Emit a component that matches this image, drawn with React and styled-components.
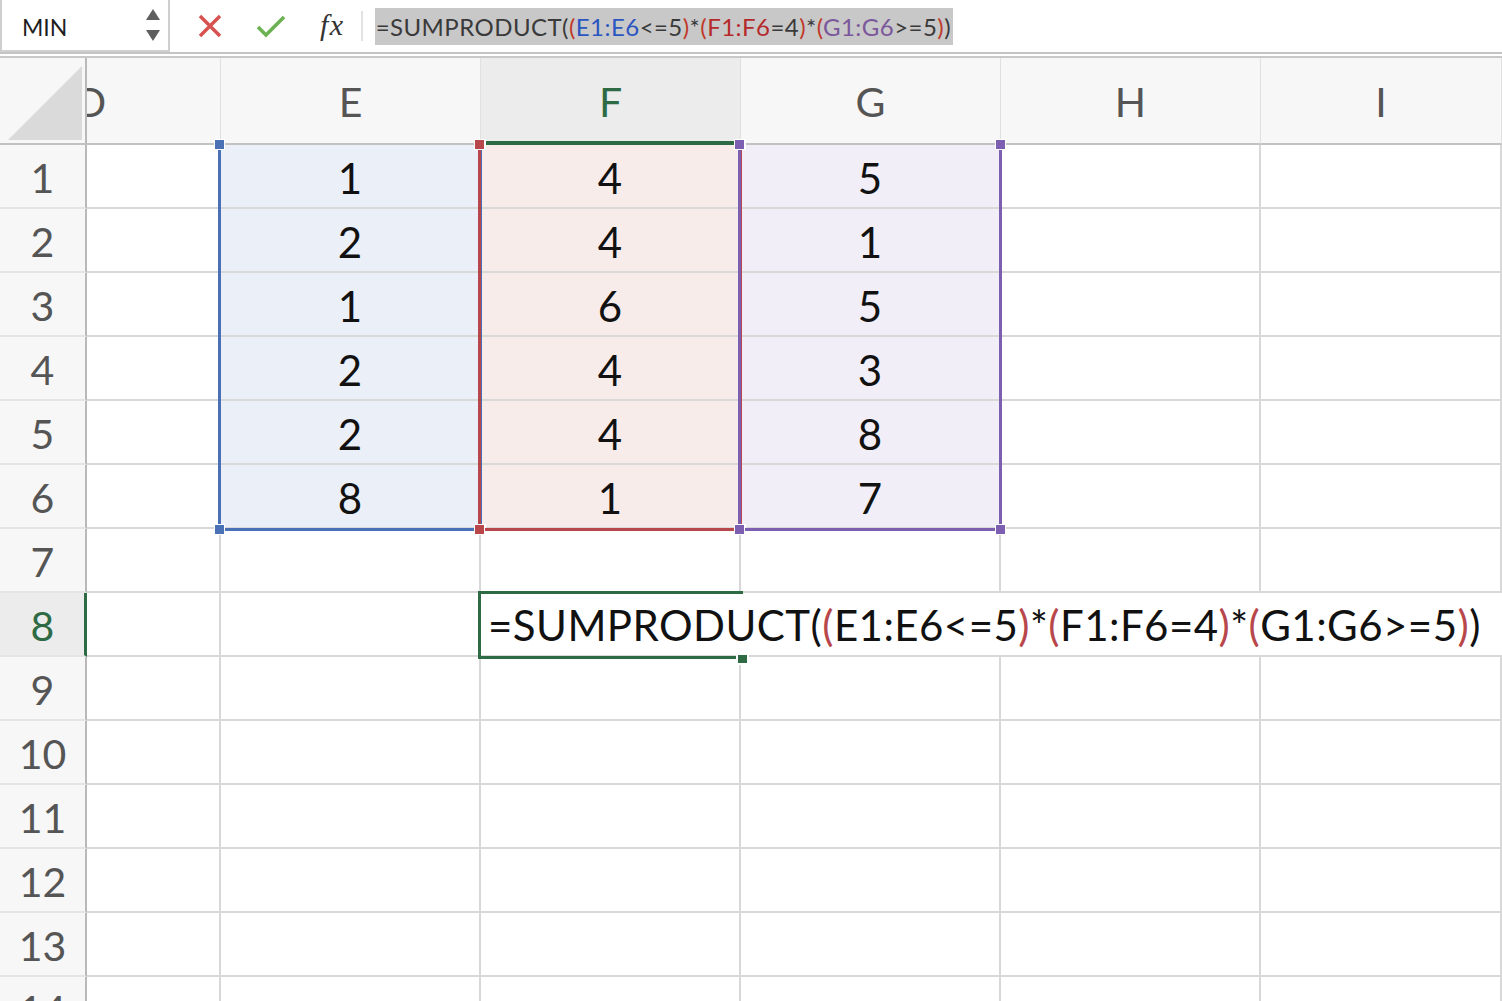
import React from 'react';
import styled, { createGlobalStyle } from 'styled-components';

const GlobalStyle = createGlobalStyle`
  html, body {
    margin: 0;
    padding: 0;
    background: #ffffff;
    overflow: hidden;
  }
  body {
    font-family: Lato, "Open Sans", sans-serif;
  }
  #root {
    width: 1502px;
    height: 1001px;
    overflow: hidden;
  }
`;

const GREEN = '#2e6b45';

const FormulaBar = styled.div`
  display: flex;
  align-items: center;
  height: 52px;
  border-bottom: 2px solid #c4c4c4;
  margin-bottom: 2px;
  background: #ffffff;
`;

const NameBox = styled.div`
  box-sizing: border-box;
  width: 170px;
  height: 52px;
  display: flex;
  align-items: center;
  justify-content: space-between;
  padding: 4px 8px 0 20px;
  border: 2px solid #cfcfcf;
  border-top: none;
  font-size: 23px;
  color: #1e1e1e;
  align-self: flex-start;
`;

const Stepper = styled.div`
  display: flex;
  flex-direction: column;
  gap: 10px;
  margin-top: -4px;
`;

const Tools = styled.div`
  display: flex;
  align-items: center;
  gap: 34px;
  padding: 0 16px 0 28px;
  height: 100%;
`;

const Fx = styled.span`
  font-family: "Liberation Serif", serif;
  font-style: italic;
  font-size: 30px;
  color: #333333;
  letter-spacing: 1.5px;
  margin-top: -2px;
`;

const Divider = styled.div`
  width: 2px;
  height: 30px;
  background: #e2e2e2;
`;

const FormulaText = styled.div`
  margin-left: 12px;
  background: #c8c8c8;
  font-size: 24px;
  line-height: 37px;
  padding: 0 2px 0 1px;
  color: #3a3a3a;
  white-space: nowrap;
  letter-spacing: 0.45px;
`;

const Tok = styled.span`
  color: ${p => p.$c || 'inherit'};
`;

const Sheet = styled.div`
  position: relative;
  display: grid;
  grid-template-columns: 87px 134px 260px 260px 260px 260px 241px;
  grid-template-rows: 87px repeat(14, 64px);
  border-top: 2px solid #c8c8c8;
`;

const Corner = styled.div`
  box-sizing: border-box;
  background: #f7f7f7;
  border-right: 2px solid #b9b9b9;
  border-bottom: 2px solid #c2c2c2;
  display: flex;
  align-items: flex-end;
  justify-content: flex-end;
  padding: 0 3px 3px 0;
`;

const ColHead = styled.div`
  box-sizing: border-box;
  display: flex;
  align-items: center;
  justify-content: center;
  overflow: hidden;
  background: ${p => (p.$active ? '#ececec' : '#f7f7f7')};
  color: ${p => (p.$active ? GREEN : '#555555')};
  border-right: 1px solid #e0e0e0;
  border-bottom: ${p => (p.$active ? `4px solid ${GREEN}` : '2px solid #c2c2c2')};
  padding-top: ${p => (p.$active ? '4px' : '2px')};
  font-size: 41px;
`;

const Shifted = styled.span`
  flex: none;
  width: 260px;
  margin-left: -126px;
  text-align: center;
`;

const RowHead = styled.div`
  box-sizing: border-box;
  display: flex;
  align-items: center;
  justify-content: center;
  background: ${p => (p.$active ? '#ececec' : '#f7f7f7')};
  color: ${p => (p.$active ? GREEN : '#555555')};
  border-right: ${p => (p.$active ? `3px solid ${GREEN}` : '2px solid #b9b9b9')};
  border-bottom: 2px solid #e4e4e4;
  font-size: 41px;
  padding-left: ${p => (p.$active ? '1px' : '0')};
  padding-top: 3px;
`;

const Cell = styled.div`
  box-sizing: border-box;
  display: flex;
  align-items: center;
  justify-content: center;
  background: ${p => p.$fill || '#ffffff'};
  border-right: 2px solid #d8d8d8;
  border-bottom: 2px solid #d8d8d8;
  font-size: 42px;
  padding-top: 3px;
  color: #111111;
`;

const OverflowCell = styled.div`
  box-sizing: border-box;
  grid-column: span 4;
  display: flex;
  align-items: center;
  padding: 2px 0 0 7px;
  border-bottom: 2px solid #d8d8d8;
  font-size: 42px;
  color: #111111;
  white-space: nowrap;
  letter-spacing: 0.45px;
`;

const Range = styled.div`
  position: absolute;
  box-sizing: border-box;
  top: 87px;
  left: ${p => p.$left}px;
  width: 264px;
  height: 386px;
  border: 3px solid ${p => p.$color};
  border-top: none;
  pointer-events: none;
`;

const Handle = styled.div`
  position: absolute;
  width: 9px;
  height: 9px;
  background: ${p => p.$color};
  box-shadow: 0 0 0 1px #ffffff;
  ${p => (p.$top ? 'top: -5px;' : 'bottom: -6px;')}
  ${p => (p.$right ? 'right: -6px;' : 'left: -6px;')}
`;

const Active = styled.div`
  position: absolute;
  box-sizing: border-box;
  top: 533px;
  left: 478px;
  width: 265px;
  height: 68px;
  border: 3px solid ${GREEN};
  border-right: none;
  pointer-events: none;
`;

const FillHandle = styled.div`
  position: absolute;
  right: -4px;
  bottom: -7px;
  width: 9px;
  height: 8px;
  background: ${GREEN};
  box-shadow: 0 0 0 2px #ffffff;
`;

const RED = '#b8474b';
const BLUE = '#4a70b6';
const PURPLE = '#7d5fb2';

const columns = [
  { key: 'D', fill: null },
  { key: 'E', fill: '#ebeff8' },
  { key: 'F', fill: '#f8eceb' },
  { key: 'G', fill: '#f1eef8' },
  { key: 'H', fill: null },
  { key: 'I', fill: null },
];

const values = {
  E: [1, 2, 1, 2, 2, 8],
  F: [4, 4, 6, 4, 4, 1],
  G: [5, 1, 5, 3, 8, 7],
};

const ranges = [
  { left: 218, color: BLUE },
  { left: 478, color: RED },
  { left: 738, color: PURPLE },
];

function Arrow({ up }) {
  return (
    <svg width="14" height="11" viewBox="0 0 14 11">
      <path d={up ? 'M7 0 L14 11 L0 11 Z' : 'M0 0 L14 0 L7 11 Z'} fill="#5f5f5f" />
    </svg>
  );
}

function CellFormula() {
  return (
    <OverflowCell>
      =SUMPRODUCT(<Tok $c={RED}>(</Tok>E1:E6&lt;=5<Tok $c={RED}>)</Tok>*
      <Tok $c={RED}>(</Tok>F1:F6=4<Tok $c={RED}>)</Tok>*
      <Tok $c={RED}>(</Tok>G1:G6&gt;=5<Tok $c={RED}>)</Tok>)
    </OverflowCell>
  );
}

export default function App() {
  const rows = Array.from({ length: 14 }, (_, i) => i + 1);

  return (
    <>
      <GlobalStyle />
      <FormulaBar>
        <NameBox>
          <span>MIN</span>
          <Stepper>
            <Arrow up />
            <Arrow />
          </Stepper>
        </NameBox>
        <Tools>
          <svg width="24" height="24" viewBox="0 0 24 24">
            <path d="M2 2 L22 22 M22 2 L2 22" stroke="#d6514f" strokeWidth="3.4" />
          </svg>
          <svg width="30" height="24" viewBox="0 0 30 24">
            <path d="M2 13 L10 21 L28 3" stroke="#6cb153" strokeWidth="3.6" fill="none" />
          </svg>
          <Fx>fx</Fx>
        </Tools>
        <Divider />
        <FormulaText>
          =SUMPRODUCT(<Tok $c="#c0392b">(</Tok><Tok $c="#2b55c0">E1:E6</Tok>&lt;=5<Tok $c="#c0392b">)</Tok>*
          <Tok $c="#c0392b">(</Tok><Tok $c="#b52a2a">F1:F6</Tok>=4<Tok $c="#c0392b">)</Tok>*
          <Tok $c="#c0392b">(</Tok><Tok $c="#7b579b">G1:G6</Tok>&gt;=5<Tok $c="#c0392b">)</Tok>)
        </FormulaText>
      </FormulaBar>

      <Sheet>
        <Corner>
          <svg width="74" height="74" viewBox="0 0 74 74">
            <path d="M0 74 L74 74 L74 0 Z" fill="#dadada" />
          </svg>
        </Corner>
        {columns.map(c => (
          <ColHead key={c.key} $active={c.key === 'F'}>
            {c.key === 'D' ? <Shifted>D</Shifted> : c.key}
          </ColHead>
        ))}

        {rows.map(r => (
          <React.Fragment key={r}>
            <RowHead $active={r === 8}>{r}</RowHead>
            {r === 8 ? (
              <>
                <Cell />
                <Cell />
                <CellFormula />
              </>
            ) : (
              columns.map(c => (
                <Cell key={c.key} $fill={r <= 6 ? c.fill : null}>
                  {values[c.key] && r <= 6 ? values[c.key][r - 1] : ''}
                </Cell>
              ))
            )}
          </React.Fragment>
        ))}

        {ranges.map(g => (
          <Range key={g.left} $left={g.left} $color={g.color}>
            <Handle $color={g.color} $top />
            <Handle $color={g.color} $top $right />
            <Handle $color={g.color} />
            <Handle $color={g.color} $right />
          </Range>
        ))}

        <Active>
          <FillHandle />
        </Active>
      </Sheet>
    </>
  );
}
